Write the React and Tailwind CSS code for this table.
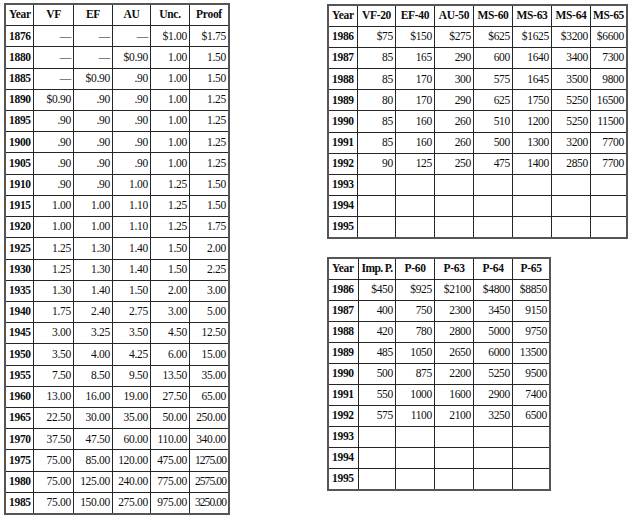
import React from "react";

const leftTable = {
  cols: [27, 39, 38, 37, 38, 38],
  header: ["Year", "VF", "EF", "AU", "Unc.", "Proof"],
  rows: [
    ["1876", "—", "—", "—", "$1.00", "$1.75"],
    ["1880", "—", "—", "$0.90", "1.00", "1.50"],
    ["1885", "—", "$0.90", ".90", "1.00", "1.50"],
    ["1890", "$0.90", ".90", ".90", "1.00", "1.25"],
    ["1895", ".90", ".90", ".90", "1.00", "1.25"],
    ["1900", ".90", ".90", ".90", "1.00", "1.25"],
    ["1905", ".90", ".90", ".90", "1.00", "1.25"],
    ["1910", ".90", ".90", "1.00", "1.25", "1.50"],
    ["1915", "1.00", "1.00", "1.10", "1.25", "1.50"],
    ["1920", "1.00", "1.00", "1.10", "1.25", "1.75"],
    ["1925", "1.25", "1.30", "1.40", "1.50", "2.00"],
    ["1930", "1.25", "1.30", "1.40", "1.50", "2.25"],
    ["1935", "1.30", "1.40", "1.50", "2.00", "3.00"],
    ["1940", "1.75", "2.40", "2.75", "3.00", "5.00"],
    ["1945", "3.00", "3.25", "3.50", "4.50", "12.50"],
    ["1950", "3.50", "4.00", "4.25", "6.00", "15.00"],
    ["1955", "7.50", "8.50", "9.50", "13.50", "35.00"],
    ["1960", "13.00", "16.00", "19.00", "27.50", "65.00"],
    ["1965", "22.50", "30.00", "35.00", "50.00", "250.00"],
    ["1970", "37.50", "47.50", "60.00", "110.00", "340.00"],
    ["1975", "75.00", "85.00", "120.00", "475.00", "1275.00"],
    ["1980", "75.00", "125.00", "240.00", "775.00", "2575.00"],
    ["1985", "75.00", "150.00", "275.00", "975.00", "3250.00"],
  ],
};

const topRight = {
  cols: [28, 37, 38, 38, 38, 38, 38, 35],
  header: ["Year", "VF-20", "EF-40", "AU-50", "MS-60", "MS-63", "MS-64", "MS-65"],
  rows: [
    ["1986", "$75", "$150", "$275", "$625", "$1625", "$3200", "$6600"],
    ["1987", "85", "165", "290", "600", "1640", "3400", "7300"],
    ["1988", "85", "170", "300", "575", "1645", "3500", "9800"],
    ["1989", "80", "170", "290", "625", "1750", "5250", "16500"],
    ["1990", "85", "160", "260", "510", "1200", "5250", "11500"],
    ["1991", "85", "160", "260", "500", "1300", "3200", "7700"],
    ["1992", "90", "125", "250", "475", "1400", "2850", "7700"],
    ["1993", "", "", "", "", "", "", ""],
    ["1994", "", "", "", "", "", "", ""],
    ["1995", "", "", "", "", "", "", ""],
  ],
};

const bottomRight = {
  cols: [29, 36, 38, 38, 38, 36],
  header: ["Year", "Imp. P.", "P-60", "P-63", "P-64", "P-65"],
  rows: [
    ["1986", "$450", "$925", "$2100", "$4800", "$8850"],
    ["1987", "400", "750", "2300", "3450", "9150"],
    ["1988", "420", "780", "2800", "5000", "9750"],
    ["1989", "485", "1050", "2650", "6000", "13500"],
    ["1990", "500", "875", "2200", "5250", "9500"],
    ["1991", "550", "1000", "1600", "2900", "7400"],
    ["1992", "575", "1100", "2100", "3250", "6500"],
    ["1993", "", "", "", "", ""],
    ["1994", "", "", "", "", ""],
    ["1995", "", "", "", "", ""],
  ],
};

function Table({ data, width, height }) {
  const nRows = data.rows.length + 1;
  return (
    <div
      className="grid gap-px bg-[#262626] border-2 border-[#555555] box-border"
      style={{
        width,
        height,
        gridTemplateColumns: data.cols.map((c) => `${c}px`).join(" "),
        gridTemplateRows: `repeat(${nRows}, minmax(0, 1fr))`,
      }}
    >
      {data.header.map((h, i) => (
        <div
          key={"h" + i}
          className={
            "bg-white flex items-center font-bold whitespace-nowrap " +
            (i === 0 ? "justify-start pl-[3px]" : "justify-center") +
            (h.length >= 7 ? " tracking-[-0.6px]" : "")
          }
        >
          {h}
        </div>
      ))}
      {data.rows.map((row, r) =>
        row.map((v, i) => (
          <div
            key={r + "-" + i}
            className={
              "bg-white flex items-center whitespace-nowrap " +
              (i === 0
                ? "justify-start pl-[3px] font-bold"
                : "justify-end pr-[2px]") +
              (v.length >= 7 ? " tracking-[-0.9px]" : "")
            }
          >
            {v}
          </div>
        ))
      )}
    </div>
  );
}

export default function App() {
  return (
    <div
      className="w-[634px] h-[522px] bg-white text-[#0d0d0d] text-[11.5px] tracking-[-0.3px] leading-none flex overflow-hidden"
      style={{ fontFamily: '"Liberation Serif", "Times New Roman", serif' }}
    >
      <div className="pl-[4px] pt-[3px]">
        <Table data={leftTable} width={226} height={512} />
      </div>
      <div className="ml-[97px] pt-[4px] flex flex-col gap-[18px]">
        <Table data={topRight} width={301} height={235} />
        <Table data={bottomRight} width={224} height={234} />
      </div>
    </div>
  );
}
